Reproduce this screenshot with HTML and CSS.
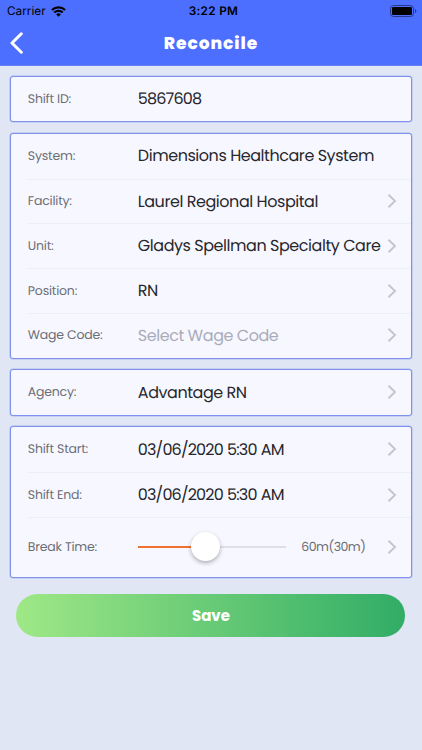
FILE: index.html
```html
<!DOCTYPE html>
<html lang="en">
<head>
<meta charset="utf-8">
<title>Reconcile</title>
<link rel="stylesheet" href="styles.css">
</head>
<body>
<svg class="defs" width="0" height="0"><symbol id="chevron" viewBox="0 0 10 16"><path d="M1.5 1.8 8 8 1.5 14.2" fill="none" stroke="currentColor" stroke-width="1.9"/></symbol></svg>
<header class="header">
  <div class="status">
    <div class="carrier"><span>Carrier</span>
      <svg width="15" height="11" viewBox="0 0 15 11"><g fill="none" stroke="#000" stroke-width="2.1"><path d="M.9 4.1a9.3 9.3 0 0 1 13.2 0"/><path d="M3.3 6.6a5.9 5.9 0 0 1 8.4 0"/></g><path d="M7.5 10.8 5.2 8.5a3.2 3.2 0 0 1 4.6 0z"/></svg>
    </div>
    <strong class="clock">3:22 PM</strong>
    <svg class="battery" width="27" height="12" viewBox="0 0 27 12"><rect x=".5" y=".5" width="23" height="11" rx="3" fill="none" stroke="#26388c"/><rect x="2" y="2" width="20" height="8" rx="1.3"/><path d="M25 4v4c1.8-.5 1.8-3.5 0-4" fill="#26388c"/></svg>
  </div>
  <div class="nav">
    <svg class="back" width="14" height="22" viewBox="0 0 14 22"><path d="M11.3 1.8 2 11l9.3 9.2" fill="none" stroke="#fff" stroke-width="3" stroke-linecap="round" stroke-linejoin="round"/></svg>
    <h1>Reconcile</h1>
  </div>
</header>
<main>
  <section class="card">
    <div class="row"><label>Shift ID:</label><span class="value numeric">5867608</span></div>
  </section>
  <section class="card">
    <div class="row"><label>System:</label><span class="value">Dimensions Healthcare System</span></div>
    <div class="row"><label>Facility:</label><span class="value">Laurel Regional Hospital</span><svg class="chev"><use href="#chevron"/></svg></div>
    <div class="row"><label>Unit:</label><span class="value">Gladys Spellman Specialty Care</span><svg class="chev"><use href="#chevron"/></svg></div>
    <div class="row"><label>Position:</label><span class="value">RN</span><svg class="chev"><use href="#chevron"/></svg></div>
    <div class="row"><label>Wage Code:</label><span class="value placeholder">Select Wage Code</span><svg class="chev"><use href="#chevron"/></svg></div>
  </section>
  <section class="card">
    <div class="row"><label>Agency:</label><span class="value">Advantage RN</span><svg class="chev"><use href="#chevron"/></svg></div>
  </section>
  <section class="card">
    <div class="row"><label>Shift Start:</label><span class="value numeric">03/06/2020 5:30 AM</span><svg class="chev"><use href="#chevron"/></svg></div>
    <div class="row"><label>Shift End:</label><span class="value numeric">03/06/2020 5:30 AM</span><svg class="chev"><use href="#chevron"/></svg></div>
    <div class="row tall"><label>Break Time:</label><div class="slider"><i class="filled"></i><i class="rest"></i><b class="knob"></b></div><span class="minutes">60m(30m)</span><svg class="chev"><use href="#chevron"/></svg></div>
  </section>
  <button class="save">Save</button>
</main>
</body>
</html>
```
FILE: styles.css
```css
* { box-sizing: border-box; }
body { margin: 0; width: 422px; height: 750px; overflow: hidden; background: #e0e6f4; font-family: Poppins, Inter, sans-serif; text-rendering: geometricPrecision; }
.defs { position: absolute; }
.header { height: 65.5px; background: #4d6fff; border-bottom: 1px solid #6580f5; }
.status { height: 22px; padding: 0 5px 0 7px; display: grid; grid-template-columns: 1fr auto 1fr; align-items: center; color: #000; font: 11.8px/22px Inter, sans-serif; }
.carrier { display: flex; align-items: center; gap: 5px; letter-spacing: 0; }
.clock { font-weight: 600; letter-spacing: .3px; padding-left: 3px; }
.battery { justify-self: end; }
.nav { height: 42px; display: grid; grid-template-columns: 40px 1fr 40px; align-items: center; }
.back { margin-left: 9.5px; }
h1 { margin: 0; text-align: center; color: #fff; font-size: 17px; font-weight: 800; letter-spacing: .95px; }
main { padding: 10.2px 10.3px 0; }
.card { margin-bottom: 10.4px; border: 1.4px solid #7d91ed; border-radius: 3px; background: #f7f8ff; padding-left: 16.5px; box-shadow: 0 0 0 .5px #7d91ed80; }
.row { height: 44.8px; display: flex; align-items: center; padding: 0 14px 1px 0; }
.row + .row { border-top: 1px solid #eceef8; }
.row.tall { height: 60px; }
label { width: 110px; flex: none; padding-top: 2px; color: #6c6d75; font-size: 12.5px; letter-spacing: -.2px; white-space: nowrap; }
.value { flex: 1; min-width: 0; color: #27272d; font-size: 16px; letter-spacing: -.45px; white-space: nowrap; }
.numeric { letter-spacing: -.83px; word-spacing: .7px; }
.placeholder { color: #a9abba; }
.chev { width: 10px; height: 16px; flex: none; color: #c4c5cc; }
.slider { position: relative; width: 148px; display: flex; align-items: center; height: 30px; }
.filled { width: 68px; height: 2px; background: #f0712f; }
.rest { flex: 1; height: 2px; background: #dfe0e7; }
.knob { position: absolute; left: 53px; top: 0; width: 29px; height: 29px; border-radius: 50%; background: #fff; box-shadow: 0 2px 4px rgba(0,0,0,.3); }
.minutes { margin-left: 15.5px; padding-top: 1px; flex: 1; color: #6c6d75; font-size: 12.5px; letter-spacing: -.5px; }
.save { display: block; width: 389px; height: 43px; margin: 16px 0 0 6.2px; border: 0; border-radius: 22px; background: linear-gradient(90deg, #9fe886, #31ad66); color: #fff; font: 700 15px Poppins, Inter, sans-serif; }
```
